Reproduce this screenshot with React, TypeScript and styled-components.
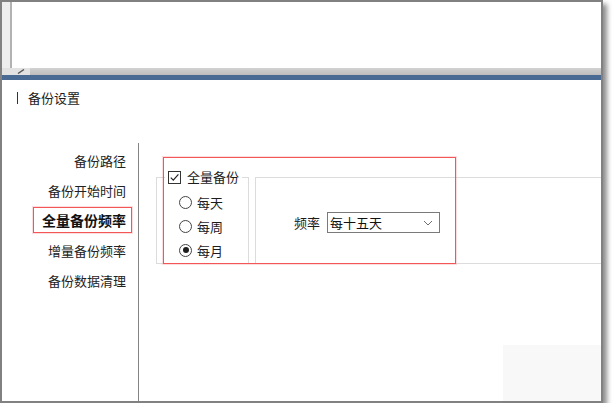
import { createGlobalStyle, styled } from 'styled-components'

const GlobalStyle = createGlobalStyle`
    html, body {
        margin: 0;
        padding: 0;
        background: #ffffff;
    }
    body {
        font-family: "Noto Sans CJK SC", "Liberation Sans", sans-serif;
        color: #1c1c1c;
    }
`

const Frame = styled('div')(
    () => `
    position: relative;
    width: 603px;
    height: 403px;
    box-sizing: border-box;
    border: 2px solid #818181;
    box-shadow: 4px 4px 5px rgba(0, 0, 0, 0.45);
    background: #ffffff;
    display: flex;
    flex-direction: column;
    overflow: hidden;
`,
)

const TopPane = styled('div')(
    () => `
    height: 66px;
    display: flex;
    flex-shrink: 0;
`,
)

const Gutter = styled('div')(
    () => `
    width: 8px;
    background: #eeeeee;
    border-right: 2px solid #b2b2b2;
`,
)

const Splitter = styled('div')(
    () => `
    height: 7px;
    display: flex;
    flex-shrink: 0;
`,
)

const SplitterCap = styled('div')(
    () => `
    width: 28px;
    position: relative;
    background: #e2e2e2;
    & svg {
        position: absolute;
        left: 15px;
        top: 1px;
    }
`,
)

const SplitterTrack = styled('div')(
    () => `
    flex: 1;
    background: linear-gradient(#d2d2d2, #bcbcbc);
`,
)

const BlueBar = styled('div')(
    () => `
    height: 5px;
    flex-shrink: 0;
    background: #496a93;
`,
)

const TitleRow = styled('div')(
    () => `
    height: 63px;
    flex-shrink: 0;
    box-sizing: border-box;
    padding: 10px 0 0 15px;
    display: flex;
    align-items: flex-start;
    font-size: 13px;
    line-height: 16px;
`,
)

const Marker = styled('span')(
    () => `
    width: 1px;
    height: 12px;
    margin: 2px 10px 0 0;
    background: #333333;
`,
)

const Content = styled('div')(
    () => `
    flex: 1;
    display: flex;
    min-height: 0;
`,
)

const Nav = styled('div')(
    () => `
    width: 136px;
    border-right: 1px solid #858585;
    box-sizing: content-box;
    padding: 2px 0 0 0;
    display: flex;
    flex-direction: column;
`,
)

const NavItem = styled('div')(
    () => `
    height: 30px;
    display: flex;
    align-items: center;
    justify-content: flex-end;
    padding-right: 6px;
`,
)

const NavLabel = styled('span')<{ $active?: boolean }>(
    ({ $active }) => `
    height: 26px;
    box-sizing: border-box;
    display: flex;
    align-items: center;
    padding: 0 5px 0 8px;
    border: 1px solid ${$active ? '#f25656' : 'transparent'};
    box-shadow: ${$active ? '0 0 0 1px rgba(246, 140, 140, 0.3)' : 'none'};
    font-size: ${$active ? 14 : 13}px;
    font-weight: ${$active ? 700 : 400};
    color: ${$active ? '#111111' : '#222222'};
`,
)

const Main = styled('div')(
    () => `
    flex: 1;
    position: relative;
    overflow: hidden;
    padding: 27px 0 0 17px;
    display: flex;
    align-items: flex-start;
    gap: 6px;
`,
)

const Group = styled('fieldset')(
    () => `
    margin: 0;
    padding: 0 0 0 22px;
    width: 93px;
    height: 94px;
    box-sizing: border-box;
    border: 1px solid #dcdcdc;
    min-width: 0;
`,
)

const Legend = styled('legend')(
    () => `
    margin-left: -14px;
    padding: 0 3px;
    display: flex;
    align-items: center;
    gap: 6px;
    height: 14px;
    font-size: 13px;
    line-height: 14px;
`,
)

const CheckBox = styled('span')(
    () => `
    width: 13px;
    height: 13px;
    box-sizing: border-box;
    border: 1px solid #333333;
    display: flex;
    align-items: center;
    justify-content: center;
    background: #ffffff;
`,
)

const RadioList = styled('div')(
    () => `
    padding-top: 6px;
    display: flex;
    flex-direction: column;
`,
)

const RadioRow = styled('label')(
    () => `
    height: 24px;
    display: flex;
    align-items: center;
    gap: 5px;
    font-size: 13px;
`,
)

const RadioDot = styled('span')<{ $checked?: boolean }>(
    ({ $checked }) => `
    width: 13px;
    height: 13px;
    box-sizing: border-box;
    border-radius: 50%;
    border: 1px solid #444444;
    display: flex;
    align-items: center;
    justify-content: center;
    &::after {
        content: '';
        width: 6px;
        height: 6px;
        border-radius: 50%;
        background: ${$checked ? '#1e1e1e' : 'transparent'};
    }
`,
)

const Panel = styled('div')(
    () => `
    flex: 1;
    margin: 7px -30px 0 0;
    height: 87px;
    box-sizing: border-box;
    border: 1px solid #dcdcdc;
    display: flex;
    align-items: center;
    padding: 4px 0 0 38px;
    gap: 7px;
    font-size: 13px;
`,
)

const Select = styled('div')(
    () => `
    width: 113px;
    height: 21px;
    box-sizing: border-box;
    border: 1px solid #7a7a7a;
    display: flex;
    align-items: center;
    justify-content: space-between;
    padding: 0 6px 0 2px;
    background: #ffffff;
    color: #111111;
`,
)

const Highlight = styled('div')(
    () => `
    position: absolute;
    left: 24px;
    top: 14px;
    width: 293px;
    height: 107px;
    box-sizing: border-box;
    border: 1px solid #f25656;
    box-shadow: 0 0 0 1px rgba(246, 140, 140, 0.3);
    pointer-events: none;
`,
)

const Patch = styled('div')(
    () => `
    position: absolute;
    right: 0;
    bottom: 0;
    width: 98px;
    height: 56px;
    background: #f8f8f8;
`,
)

const navItems = ['备份路径', '备份开始时间', '全量备份频率', '增量备份频率', '备份数据清理']
const radios = [
    { label: '每天', checked: false },
    { label: '每周', checked: false },
    { label: '每月', checked: true },
]

export default function App() {
    return (
        <>
            <GlobalStyle />
            <Frame>
                <TopPane>
                    <Gutter />
                </TopPane>
                <Splitter>
                    <SplitterCap>
                        <svg width="8" height="5" viewBox="0 0 8 5">
                            <path d="M1 4.5 L7 0.5" stroke="#555" strokeWidth="1.4" />
                        </svg>
                    </SplitterCap>
                    <SplitterTrack />
                </Splitter>
                <BlueBar />
                <TitleRow>
                    <Marker />
                    备份设置
                </TitleRow>
                <Content>
                    <Nav>
                        {navItems.map((item, i) => (
                            <NavItem key={item}>
                                <NavLabel $active={i === 2}>{item}</NavLabel>
                            </NavItem>
                        ))}
                    </Nav>
                    <Main>
                        <Group>
                            <Legend>
                                <CheckBox>
                                    <svg width="11" height="11" viewBox="0 0 11 11">
                                        <path d="M1.8 5.6 L4.3 8.2 L9.4 2.4" fill="none" stroke="#222" strokeWidth="1.2" />
                                    </svg>
                                </CheckBox>
                                全量备份
                            </Legend>
                            <RadioList>
                                {radios.map((r) => (
                                    <RadioRow key={r.label}>
                                        <RadioDot $checked={r.checked} />
                                        {r.label}
                                    </RadioRow>
                                ))}
                            </RadioList>
                        </Group>
                        <Panel>
                            频率
                            <Select>
                                每十五天
                                <svg width="10" height="6" viewBox="0 0 10 6">
                                    <path d="M1 1 L5 5 L9 1" fill="none" stroke="#6e6e6e" strokeWidth="1" />
                                </svg>
                            </Select>
                        </Panel>
                        <Highlight />
                        <Patch />
                    </Main>
                </Content>
            </Frame>
        </>
    )
}
